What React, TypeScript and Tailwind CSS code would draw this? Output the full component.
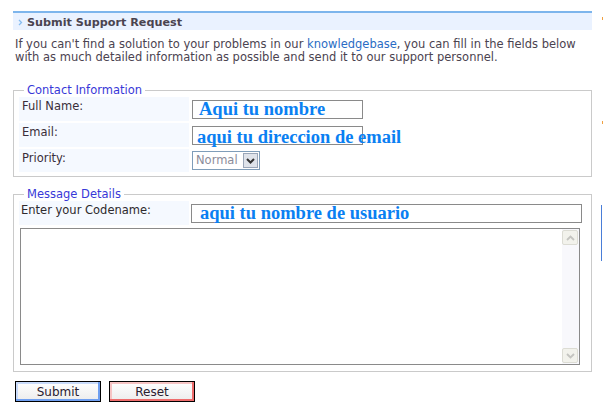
export default function App() {
  const contactRows = [
    { label: 'Full Name:', value: 'Aqui tu nombre', pos: 'left-[6px] top-[-3px]' },
    { label: 'Email:', value: 'aqui tu direccion de email', pos: 'left-[4px] top-[-1px]' },
  ];

  return (
    <div className="relative w-[603px] h-[407px] bg-white overflow-hidden pt-[11px] font-['DejaVu_Sans',Verdana,sans-serif] text-[11.5px] text-[#3d3440]">
      {/* Header bar */}
      <div className="ml-[13px] w-[579px] h-[19px] border-t-2 border-[#7db5ec] bg-[#eaf2ff] flex items-center pl-[5px] gap-[4px] pt-[2px]">
        <svg width="5" height="7" viewBox="0 0 5 7">
          <path d="M1 1l2.5 2.5L1 6" stroke="#86bdf0" strokeWidth="1.3" fill="none" />
        </svg>
        <span className="font-bold text-[11.2px] text-[#4a4450] leading-none">Submit Support Request</span>
      </div>

      {/* Intro */}
      <p className="ml-[15px] mt-[8px] w-[585px] leading-[13px] text-[#4b4350]">
        If you can't find a solution to your problems in our{' '}
        <a className="text-[#2a6cc4]">knowledgebase</a>, you can fill in the fields below
        <br />
        with as much detailed information as possible and send it to our support personnel.
      </p>

      {/* Contact information */}
      <fieldset className="ml-[13px] mt-[20px] w-[579px] border border-[#cacaca] pl-[5px] pr-[5px] pb-[4px]">
        <legend className="ml-[5px] px-[3px] text-[#3838d8] leading-[12px]">Contact Information</legend>
        <div className="flex flex-col gap-[2px] mt-[1px]">
          {contactRows.map((row) => (
            <div key={row.label} className="flex h-[24px]">
              <div className="w-[170px] bg-[#f5f9ff] pl-[3px] pt-[1px] text-[#3a2e3a]">{row.label}</div>
              <div className="pl-[3px] pt-[3px]">
                <div className="relative w-[171px] h-[19px] border border-[#8a8a8a] bg-white">
                  <span className={`absolute ${row.pos} whitespace-nowrap font-['Liberation_Serif',serif] font-bold text-[18.5px] leading-[22px] text-[#0a80f2]`}>
                    {row.value}
                  </span>
                </div>
              </div>
            </div>
          ))}
          <div className="flex h-[23px]">
            <div className="w-[170px] bg-[#f5f9ff] pl-[3px] pt-[1px] text-[#3a2e3a]">Priority:</div>
            <div className="pl-[3px] pt-[2px]">
              <div className="flex items-center w-[68px] h-[19px] border border-[#7f9db9] bg-white">
                <span className="flex-1 pl-[3px] text-[#8c8c9a] leading-none">Normal</span>
                <div className="w-[15px] h-[15px] mr-[1px] border border-[#9aa6b8] bg-[#dfe3ea] flex items-center justify-center">
                  <svg width="9" height="6" viewBox="0 0 9 6">
                    <path d="M1 1l3.5 3.5L8 1" stroke="#333" strokeWidth="2" fill="none" />
                  </svg>
                </div>
              </div>
            </div>
          </div>
        </div>
      </fieldset>

      {/* Message details */}
      <fieldset className="ml-[13px] mt-[11px] w-[579px] border border-[#cacaca] pl-[5px] pr-[9px] pb-[6px]">
        <legend className="ml-[5px] px-[3px] text-[#3838d8] leading-[12px]">Message Details</legend>
        <div className="flex h-[24px] mt-[1px]">
          <div className="w-[170px] bg-[#f5f9ff] pl-[2px] pt-[1px] text-[#2e2a2e]">Enter your Codename:</div>
          <div className="flex-1 pl-[2px] pt-[3px]">
            <div className="relative h-[19px] border border-[#8a8a8a] bg-white">
              <span className="absolute left-[8px] top-[-3px] whitespace-nowrap font-['Liberation_Serif',serif] font-bold text-[18.5px] leading-[22px] text-[#0a80f2]">
                aqui tu nombre de usuario
              </span>
            </div>
          </div>
        </div>
        <div className="ml-[1px] mt-[3px] mr-[2px] h-[137px] border border-[#8a8a8a] flex">
          <div className="flex-1 bg-white" />
          <div className="w-[17px] bg-[#f8f8fc] flex flex-col justify-between py-[1px] pr-[1px]">
            <div className="h-[15px] border border-[#dcdcd4] bg-[#f2f2ec] rounded-[2px] flex items-center justify-center">
              <svg width="9" height="6" viewBox="0 0 9 6">
                <path d="M1 5l3.5-3.5L8 5" stroke="#c4c4c0" strokeWidth="1.8" fill="none" />
              </svg>
            </div>
            <div className="h-[15px] border border-[#dcdcd4] bg-[#f2f2ec] rounded-[2px] flex items-center justify-center">
              <svg width="9" height="6" viewBox="0 0 9 6">
                <path d="M1 1l3.5 3.5L8 1" stroke="#c4c4c0" strokeWidth="1.8" fill="none" />
              </svg>
            </div>
          </div>
        </div>
      </fieldset>

      {/* Buttons */}
      <div className="ml-[15px] mt-[9px] flex gap-[8px]">
        <button className="w-[86px] h-[21px] border border-black shadow-[inset_-2px_-2px_0_#6f9ff0,inset_2px_2px_0_#c9dbfb] bg-gradient-to-b from-white to-[#ececec] text-[12px] text-[#2a2030] leading-none font-['DejaVu_Sans',Verdana,sans-serif]">
          Submit
        </button>
        <button className="w-[86px] h-[21px] border border-black shadow-[inset_-2px_-2px_0_#ee6c6c,inset_2px_2px_0_#f6c4c4] bg-gradient-to-b from-white to-[#ececec] text-[12px] text-[#2a2030] leading-none font-['DejaVu_Sans',Verdana,sans-serif]">
          Reset
        </button>
      </div>

      {/* Edge of neighbouring column */}
      <span className="absolute right-0 top-[17px] w-[1px] h-[3px] bg-[#f0a040]" />
      <span className="absolute right-0 top-[121px] w-[1px] h-[3px] bg-[#f0a040]" />
      <span className="absolute right-[1px] top-[205px] w-[1px] h-[56px] bg-[#4a7ed8]" />
    </div>
  );
}
